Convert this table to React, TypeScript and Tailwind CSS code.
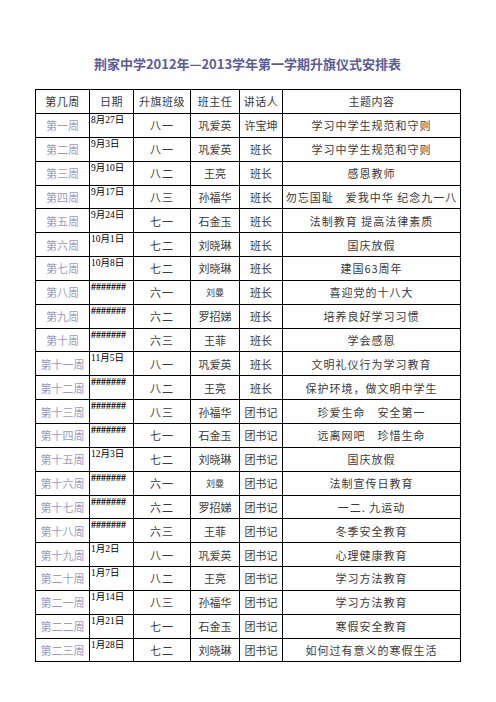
const rows: [string, string, string, string, string, string][] = [
  ['第一周', '8月27日', '八一', '巩爱英', '许宝坤', '学习中学生规范和守则'],
  ['第二周', '9月3日', '八一', '巩爱英', '班长', '学习中学生规范和守则'],
  ['第三周', '9月10日', '八二', '王亮', '班长', '感恩教师'],
  ['第四周', '9月17日', '八三', '孙福华', '班长', '勿忘国耻\u3000爱我中华 纪念九一八'],
  ['第五周', '9月24日', '七一', '石金玉', '班长', '法制教育 提高法律素质'],
  ['第六周', '10月1日', '七二', '刘晓琳', '班长', '国庆放假'],
  ['第七周', '10月8日', '七二', '刘晓琳', '班长', '建国63周年'],
  ['第八周', '#######', '六一', '刘曼', '班长', '喜迎党的十八大'],
  ['第九周', '#######', '六二', '罗招娣', '班长', '培养良好学习习惯'],
  ['第十周', '#######', '六三', '王菲', '班长', '学会感恩'],
  ['第十一周', '11月5日', '八一', '巩爱英', '班长', '文明礼仪行为学习教育'],
  ['第十二周', '#######', '八二', '王亮', '班长', '保护环境，做文明中学生'],
  ['第十三周', '#######', '八三', '孙福华', '团书记', '珍爱生命\u3000安全第一'],
  ['第十四周', '#######', '七一', '石金玉', '团书记', '远离网吧\u3000珍惜生命'],
  ['第十五周', '12月3日', '七二', '刘晓琳', '团书记', '国庆放假'],
  ['第十六周', '#######', '六一', '刘曼', '团书记', '法制宣传日教育'],
  ['第十七周', '#######', '六二', '罗招娣', '团书记', '一二. 九运动'],
  ['第十八周', '#######', '六三', '王菲', '团书记', '冬季安全教育'],
  ['第十九周', '1月2日', '八一', '巩爱英', '团书记', '心理健康教育'],
  ['第二十周', '1月7日', '八二', '王亮', '团书记', '学习方法教育'],
  ['第二一周', '1月14日', '八三', '孙福华', '团书记', '学习方法教育'],
  ['第二二周', '1月21日', '七一', '石金玉', '团书记', '寒假安全教育'],
  ['第二三周', '1月28日', '七二', '刘晓琳', '团书记', '如何过有意义的寒假生活'],
]

const cjk = { fontFamily: '"Noto Sans CJK SC", "Noto Sans", sans-serif' }
const serif = { fontFamily: '"Liberation Serif", "Noto Sans CJK SC", serif' }

export default function App() {
  return (
    <div className="w-[496px] h-[702px] bg-white pt-[55px] pl-[35px]" style={cjk}>
      <h1 className="w-[425px] text-center text-[13px] leading-[18px] font-bold text-[#5c5c98]">
        荆家中学2012年—2013学年第一学期升旗仪式安排表
      </h1>
      <table className="mt-[16px] w-[425px] table-fixed border-collapse text-[11px] text-[#3a3a3a]">
        <colgroup>
          <col className="w-[54px]" />
          <col className="w-[44px]" />
          <col className="w-[57px]" />
          <col className="w-[49px]" />
          <col className="w-[43px]" />
          <col className="w-[178px]" />
        </colgroup>
        <thead>
          <tr className="h-[24px]">
            {['第几周', '日期', '升旗班级', '班主任', '讲话人', '主题内容'].map((h) => (
              <th key={h} className="border border-black p-0 font-normal text-center align-middle leading-none tracking-[0.5px]">
                {h}
              </th>
            ))}
          </tr>
        </thead>
        <tbody>
          {rows.map(([week, date, cls, teacher, speaker, topic]) => (
            <tr key={week} className="h-[23.85px]">
              <td className="border border-black p-0 pt-[1px] text-center align-middle leading-none text-[#9b9bc6] whitespace-nowrap">
                {week}
              </td>
              <td className="border border-black p-0 pl-[1px] align-top leading-[10px] text-black whitespace-nowrap" style={serif}>
                {date.startsWith('#') ? (
                  <span className="text-[10px] font-bold">{date}</span>
                ) : (
                  <span className="text-[9.5px]">{date}</span>
                )}
              </td>
              <td className="border border-black p-0 pt-[1px] text-center align-middle leading-none tracking-[1px]">{cls}</td>
              <td className={`border border-black p-0 pt-[1px] text-center align-middle leading-none ${teacher === '刘曼' ? 'text-[9px]' : ''}`}>
                {teacher}
              </td>
              <td className="border border-black p-0 pt-[1px] text-center align-middle leading-none">{speaker}</td>
              <td className="border border-black p-0 pt-[1px] text-center align-middle leading-none tracking-[1px] whitespace-nowrap">
                {topic}
              </td>
            </tr>
          ))}
        </tbody>
      </table>
    </div>
  )
}
